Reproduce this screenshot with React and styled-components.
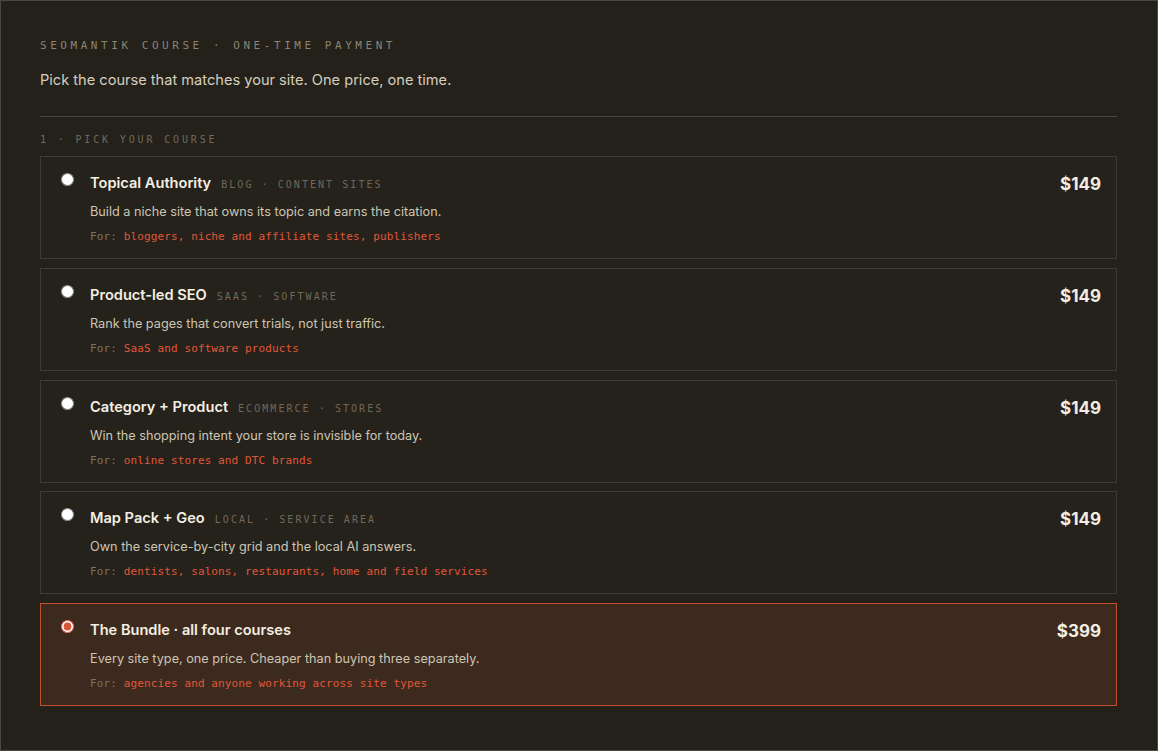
import React, { useState } from 'react';
import styled, { createGlobalStyle, css } from 'styled-components';

const GlobalStyle = createGlobalStyle`
    html, body {
        margin: 0;
        padding: 0;
        background: #24211b;
    }
    * {
        box-sizing: border-box;
    }
`;

const mono = `"DejaVu Sans Mono", "Liberation Mono", monospace`;
const sans = `Inter, "Noto Sans", sans-serif`;

const Page = styled.main`
    min-height: 100vh;
    border: 1px solid #4a473f;
    background: #24211b;
    padding: 37px 40px 40px 39px;
    font-family: ${sans};
`;

const Eyebrow = styled.div`
    font-family: ${mono};
    font-size: 11px;
    line-height: 16px;
    letter-spacing: 3.55px;
    color: #8b8472;
    text-transform: uppercase;
`;

const Lead = styled.p`
    margin: 15px 0 0;
    font-size: 14.6px;
    line-height: 22px;
    color: #d6cebd;
`;

const Divider = styled.hr`
    margin: 25px 0 0;
    border: 0;
    border-top: 1px solid #4a463d;
`;

const StepLabel = styled.div`
    margin-top: 16px;
    font-family: ${mono};
    font-size: 10px;
    line-height: 14px;
    letter-spacing: 2.85px;
    color: #716a5a;
    text-transform: uppercase;
`;

const List = styled.div`
    margin-top: 9px;
    display: flex;
    flex-direction: column;
    gap: 8.75px;
`;

const Card = styled.label`
    display: grid;
    grid-template-columns: 13px 1fr auto;
    column-gap: 16px;
    align-items: start;
    padding: 15px 15px 12px 20px;
    height: 103px;
    border: 1px solid #3e3b33;
    background: #25221b;
    cursor: pointer;
    ${props => props.selected && css`
        background: #3d2a1f;
        border-color: #c2502f;
    `}
`;

const Radio = styled.input`
    margin: 0;
    margin-top: 1px;
    width: 13px;
    height: 13px;
    accent-color: #d9553a;
`;

const Body = styled.div`
    display: flex;
    flex-direction: column;
`;

const TitleRow = styled.div`
    display: flex;
    align-items: baseline;
    gap: 10px;
    height: 22px;
    line-height: 22px;
`;

const Title = styled.span`
    font-size: 14.6px;
    font-weight: 600;
    color: #f4eee2;
`;

const Tag = styled.span`
    font-family: ${mono};
    font-size: 10px;
    letter-spacing: 2.05px;
    color: #6f695a;
    text-transform: uppercase;
`;

const Desc = styled.div`
    margin-top: 8px;
    font-size: 12.7px;
    line-height: 20px;
    color: #cdc5b3;
`;

const Audience = styled.div`
    margin-top: 7px;
    font-family: ${mono};
    font-size: 11px;
    line-height: 16px;
    letter-spacing: 0.12px;
    color: #e0573a;
    span {
        color: #7a7363;
    }
`;

const Price = styled.div`
    margin-top: 1px;
    font-size: 17px;
    font-weight: 700;
    line-height: 22px;
    color: #f4eee2;
`;

const courses = [
    {
        id: 'topical',
        title: 'Topical Authority',
        tag: 'Blog · Content sites',
        desc: 'Build a niche site that owns its topic and earns the citation.',
        audience: 'bloggers, niche and affiliate sites, publishers',
        price: '$149',
    },
    {
        id: 'product',
        title: 'Product-led SEO',
        tag: 'SaaS · Software',
        desc: 'Rank the pages that convert trials, not just traffic.',
        audience: 'SaaS and software products',
        price: '$149',
    },
    {
        id: 'category',
        title: 'Category + Product',
        tag: 'Ecommerce · Stores',
        desc: 'Win the shopping intent your store is invisible for today.',
        audience: 'online stores and DTC brands',
        price: '$149',
    },
    {
        id: 'local',
        title: 'Map Pack + Geo',
        tag: 'Local · Service area',
        desc: 'Own the service-by-city grid and the local AI answers.',
        audience: 'dentists, salons, restaurants, home and field services',
        price: '$149',
    },
    {
        id: 'bundle',
        title: 'The Bundle · all four courses',
        desc: 'Every site type, one price. Cheaper than buying three separately.',
        audience: 'agencies and anyone working across site types',
        price: '$399',
    },
];

export default function App() {
    const [picked, setPicked] = useState('bundle');

    return (
        <>
            <GlobalStyle />
            <Page>
                <Eyebrow>Seomantik course · one-time payment</Eyebrow>
                <Lead>Pick the course that matches your site. One price, one time.</Lead>
                <Divider />
                <StepLabel>1 · Pick your course</StepLabel>
                <List>
                    {courses.map(c => (
                        <Card key={c.id} selected={picked === c.id}>
                            <Radio
                                type="radio"
                                name="course"
                                checked={picked === c.id}
                                onChange={() => setPicked(c.id)}
                            />
                            <Body>
                                <TitleRow>
                                    <Title>{c.title}</Title>
                                    {c.tag && <Tag>{c.tag}</Tag>}
                                </TitleRow>
                                <Desc>{c.desc}</Desc>
                                <Audience><span>For: </span>{c.audience}</Audience>
                            </Body>
                            <Price>{c.price}</Price>
                        </Card>
                    ))}
                </List>
            </Page>
        </>
    );
}
